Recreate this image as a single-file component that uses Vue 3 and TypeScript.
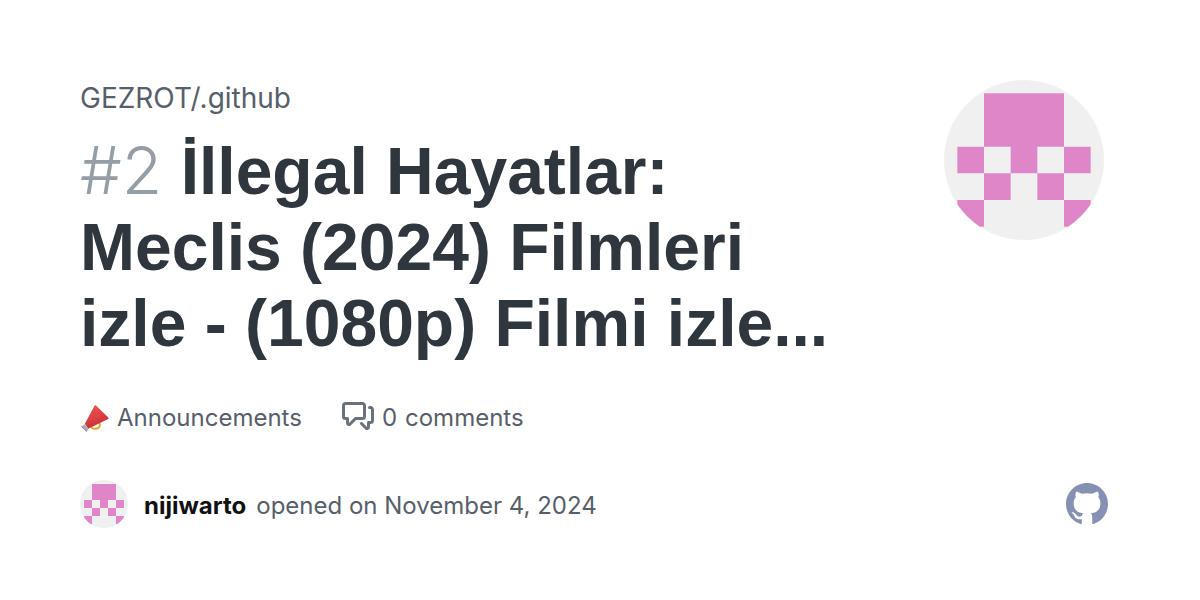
<script setup lang="ts">
const repository = 'GEZROT/.github'
const discussionNumber = 2
const titleLines: string[] = [
  'İllegal Hayatlar:',
  'Meclis (2024) Filmleri',
  'izle - (1080p) Filmi izle...',
]
const category = 'Announcements'
const commentCount = 0
const author = 'nijiwarto'
const openedOn = 'November 4, 2024'

// Identicon: a 5x5 grid of 2-unit cells with a margin of one unit.
const pattern: string[] = ['.###.', '.###.', '#.#.#', '.#.#.', '#...#']
const identicon: string = pattern
  .flatMap((row, y) =>
    [...row].map((mark, x) => (mark === '#' ? `M${1 + x * 2} ${1 + y * 2}h2v2h-2z` : '')),
  )
  .join('')
</script>

<template>
  <main class="card">
    <header class="top">
      <div class="heading">
        <a class="repo" href="#repository">{{ repository }}</a>
        <h1 class="title">
          <span v-for="(line, i) in titleLines" :key="i" class="line">
            <span v-if="i === 0" class="number">#{{ discussionNumber }}</span>
            {{ line }}
          </span>
        </h1>
      </div>
      <svg class="avatar large" viewBox="0 0 12 12" role="img" aria-label="Avatar">
        <path :d="identicon" />
      </svg>
    </header>

    <section class="meta">
      <span class="item">
        <svg class="horn" viewBox="0 0 30 30" aria-hidden="true">
          <defs>
            <linearGradient id="hornRed" x1="0.3" y1="0" x2="0.7" y2="1">
              <stop offset="0" stop-color="#ee5350" />
              <stop offset="0.5" stop-color="#df4043" />
              <stop offset="1" stop-color="#b92c34" />
            </linearGradient>
          </defs>
          <path d="M12 23.5c0 3.500 7.500 2.500 8.500-.8.4-1.500-.2-2.600-1-3.200" fill="none" stroke="#f2a21e" stroke-width="2" />
          <path d="M15 1.800C15.700 1.100 16.700 1.400 17.300 2.200L29 13.600c.8.9.5 1.900-.4 2.300L8.500 25.500 5 20.500Z" fill="url(#hornRed)" />
          <path d="M5 21 8.900 25.600 7 28.600 1.500 23.300Z" fill="#a9b0b6" />
          <path d="M1.500 23.300 7 28.600" stroke="#858e95" stroke-width="1" />
        </svg>
        <span>{{ category }}</span>
      </span>
      <span class="item">
        <svg class="bubbles" viewBox="0 0 16 16" aria-hidden="true">
          <path d="M1.75 1h8.5c.966 0 1.75.784 1.75 1.75v5.5A1.75 1.75 0 0 1 10.25 10H7.061l-2.574 2.573A1.458 1.458 0 0 1 2 11.543V10h-.25A1.75 1.75 0 0 1 0 8.25v-5.5C0 1.784.784 1 1.75 1ZM1.5 2.75v5.5c0 .138.112.25.25.25h1a.75.75 0 0 1 .75.75v2.19l2.72-2.72a.749.749 0 0 1 .53-.22h3.5a.25.25 0 0 0 .25-.25v-5.5a.25.25 0 0 0-.25-.25h-8.5a.25.25 0 0 0-.25.25Zm13 2a.25.25 0 0 0-.25-.25h-.5a.75.75 0 0 1 0-1.5h.5c.966 0 1.75.784 1.75 1.75v5.5A1.75 1.75 0 0 1 14.25 12H14v1.543a1.458 1.458 0 0 1-2.487 1.03L9.22 12.28a.749.749 0 0 1 .326-1.275.749.749 0 0 1 .734.215l2.22 2.22v-2.19a.75.75 0 0 1 .75-.75h1a.25.25 0 0 0 .25-.25Z" />
        </svg>
        <span>{{ commentCount }}</span>
        <span>comments</span>
      </span>
    </section>

    <footer class="byline">
      <svg class="avatar small" viewBox="0 0 12 12" aria-hidden="true">
        <path :d="identicon" />
      </svg>
      <p class="text">
        <a class="author" href="#author">{{ author }}</a>
        <span>opened on {{ openedOn }}</span>
      </p>
      <svg class="mark" viewBox="0 0 16 16" role="img" aria-label="GitHub">
        <path d="M8 0C3.58 0 0 3.58 0 8c0 3.54 2.29 6.53 5.47 7.59.4.07.55-.17.55-.38 0-.19-.01-.82-.01-1.49-2.01.37-2.53-.49-2.69-.94-.09-.23-.48-.94-.82-1.13-.28-.15-.68-.52-.01-.53.63-.01 1.08.58 1.23.82.72 1.21 1.87.87 2.33.66.07-.52.28-.87.51-1.07-1.78-.2-3.64-.89-3.64-3.95 0-.87.31-1.59.82-2.15-.08-.2-.36-1.02.08-2.12 0 0 .67-.21 2.2.82.64-.18 1.32-.27 2-.27.68 0 1.36.09 2 .27 1.53-1.04 2.2-.82 2.2-.82.44 1.1.16 1.92.08 2.12.51.56.82 1.27.82 2.15 0 3.07-1.87 3.75-3.65 3.95.29.25.54.73.54 1.48 0 1.07-.01 1.93-.01 2.2 0 .21.15.46.55.38A8.013 8.013 0 0 0 16 8c0-4.42-3.58-8-8-8z" />
      </svg>
    </footer>
  </main>
</template>

<style>
body {
  background: #ffffff;
}
</style>

<style scoped>
.card {
  box-sizing: border-box;
  padding: 80px;
  color: #57606a;
  font-family: Inter, "Liberation Sans", sans-serif;
  font-size: 24px;
  line-height: 36px;
}

.top {
  display: flex;
  justify-content: space-between;
  gap: 40px;
  padding-right: 16px;
}

.repo {
  display: block;
  color: inherit;
  font-size: 28px;
  text-decoration: none;
}

.title {
  margin: 17px 0 0;
  color: #2f363d;
  font-family: "Liberation Sans", Arial, sans-serif;
  font-size: 66px;
  font-weight: 700;
  line-height: 76px;
}

.line {
  display: block;
  white-space: nowrap;
}

.number {
  color: #959da5;
  font-family: Inter, "Liberation Sans", sans-serif;
  font-weight: 300;
  line-height: 1;
}

.avatar {
  flex: none;
  border-radius: 50%;
  background: #f0f0f0;
  fill: #df86c9;
}

.large {
  width: 160px;
  height: 160px;
}

.small {
  width: 48px;
  height: 48px;
  margin-right: 16px;
}

.meta {
  display: flex;
  gap: 40px;
  margin-top: 39px;
}

.item {
  display: flex;
  align-items: center;
  gap: 8px;
}

.horn {
  width: 29px;
  height: 29px;
}

.bubbles {
  width: 32px;
  height: 32px;
  margin-bottom: 4px;
  fill: #6a737d;
}

.byline {
  display: flex;
  align-items: center;
  margin-top: 44px;
}

.text {
  display: flex;
  gap: 10px;
  margin: 0;
  padding-top: 4px;
}

.author {
  color: #111111;
  font-weight: 700;
  text-decoration: none;
}

.mark {
  width: 42px;
  height: 42px;
  margin-right: 12px;
  margin-left: auto;
  fill: #8491b3;
}
</style>
